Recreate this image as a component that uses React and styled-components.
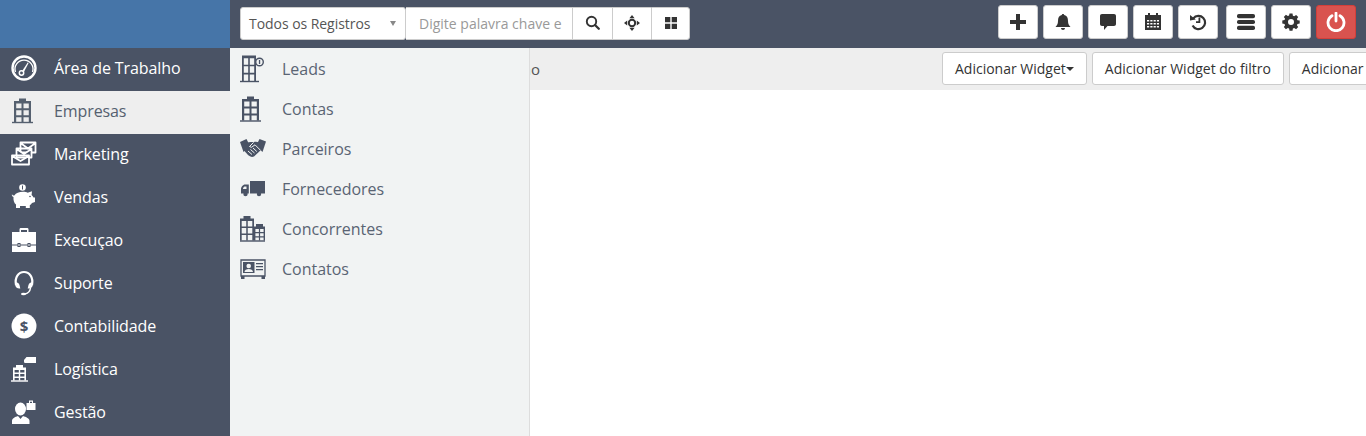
import React from "react";
import styled, { createGlobalStyle } from "styled-components";

const GlobalStyle = createGlobalStyle`
  html, body { margin: 0; padding: 0; height: 100%; overflow: hidden; background: #fff; }
  body { font-family: "Open Sans", "Liberation Sans", sans-serif; }
  #root { height: 100%; }
`;

const Page = styled.div`
  display: grid;
  grid-template-columns: 230px 1fr;
  grid-template-rows: 48px 1fr;
  height: 436px;
  position: relative;
  overflow: hidden;
`;
const Logo = styled.div`
  background: #4675a8;
`;
const TopBar = styled.header`
  background: #4a5365;
  display: flex;
  align-items: flex-start;
  justify-content: space-between;
  padding: 5px 10px 0;
`;
const SearchGroup = styled.div`
  display: flex;
  height: 33px;
  margin-top: 2px;
`;
const Select = styled.div`
  width: 166px;
  box-sizing: border-box;
  background: #fff;
  border: 1px solid #ccc;
  border-radius: 3px;
  display: flex;
  align-items: center;
  justify-content: space-between;
  padding: 0 9px 0 8px;
  font-size: 14px;
  letter-spacing: -0.05px;
  color: #555;
  &::after {
    content: "";
    border-left: 3.5px solid transparent;
    border-right: 3.5px solid transparent;
    border-top: 5px solid #888;
  }
`;
const SearchInput = styled.div`
  width: 166px;
  box-sizing: border-box;
  background: #fff;
  border-top: 1px solid #ccc;
  border-bottom: 1px solid #ccc;
  display: flex;
  align-items: center;
  padding: 0 12px 0 13px;
  font-size: 14px;
  color: #999;
  white-space: nowrap;
  overflow: hidden;
`;
const SearchButton = styled.div`
  width: ${(p) => (p.$first ? "40px" : "39px")};
  box-sizing: border-box;
  background: #fff;
  border: 1px solid #ccc;
  border-right-width: ${(p) => (p.$last ? "1px" : "0")};
  border-radius: ${(p) => (p.$last ? "0 3px 3px 0" : "0")};
  display: flex;
  align-items: center;
  justify-content: center;
  padding-bottom: 2px;
  color: #333;
`;
const Actions = styled.div`
  display: flex;
  gap: 5px;
`;
const ActionButton = styled.div`
  width: 40px;
  height: 34px;
  box-sizing: border-box;
  background: ${(p) => (p.$danger ? "#d9534f" : "#fff")};
  border: 1px solid ${(p) => (p.$danger ? "#d43f3a" : "#ccc")};
  border-radius: 3px;
  margin-left: ${(p) => (p.$spaced ? "3px" : "0")};
  display: flex;
  align-items: center;
  justify-content: center;
  color: ${(p) => (p.$danger ? "#fff" : "#333")};
`;
const Sidebar = styled.nav`
  background: #4a5365;
`;
const SideItem = styled.div`
  height: 43px;
  box-sizing: border-box;
  padding-bottom: 3px;
  display: flex;
  align-items: center;
  background: ${(p) => (p.$active ? "#eeeeee" : "transparent")};
  color: ${(p) => (p.$active ? "#55606f" : "#fff")};
  font-size: 16px;
  letter-spacing: -0.1px;
`;
const SideIcon = styled.span`
  width: 54px;
  padding-left: 11px;
  box-sizing: border-box;
  display: flex;
  align-items: center;
  flex: none;
`;
const Main = styled.main`
  min-width: 0;
  overflow: hidden;
`;
const ContentBar = styled.div`
  height: 42px;
  background: #eeeeee;
  display: flex;
  align-items: flex-start;
  padding-top: 4px;
  box-sizing: border-box;
`;
const Title = styled.div`
  width: 310px;
  flex: none;
  height: 34px;
  line-height: 35px;
  text-align: right;
  font-size: 15px;
  color: #555;
  white-space: nowrap;
  overflow: hidden;
`;
const WidgetButtons = styled.div`
  display: flex;
  gap: 5px;
  margin-left: 402px;
`;
const WidgetButton = styled.div`
  height: 33px;
  box-sizing: border-box;
  background: #fff;
  border: 1px solid #ccc;
  border-radius: 3px;
  padding: 0 ${(p) => (p.$bleed ? "40px" : "12px")} 0 12px;
  display: flex;
  align-items: center;
  flex: none;
  font-size: 14px;
  color: #333;
  white-space: nowrap;
`;
const Caret = styled.span`
  border-left: 4px solid transparent;
  border-right: 4px solid transparent;
  border-top: 4px solid #333;
`;
const SubMenu = styled.div`
  position: absolute;
  left: 230px;
  top: 48px;
  bottom: 0;
  width: 300px;
  box-sizing: border-box;
  background: #f1f3f3;
  border-right: 1px solid #ddd;
  padding-top: 1px;
`;
const SubItem = styled.div`
  height: 40px;
  display: flex;
  align-items: center;
  font-size: 16px;
  letter-spacing: -0.02px;
  color: #5a6473;
`;
const SubIcon = styled.span`
  width: 52px;
  padding-left: 10px;
  box-sizing: border-box;
  display: flex;
  align-items: center;
  flex: none;
  color: #4a5365;
`;

const Ico = ({ size = 26, w, children }) => (
  <svg width={w || size} height={size} viewBox={`0 0 ${w || size} ${size}`} fill="currentColor" style={{ display: "block" }}>
    {children}
  </svg>
);

// frame with two columns and three rows of windows, on a ground line
const Building = ({ x = 0, y = 0, w = 18, h = 22, bar = 22, cap = true, edge = 2.2, gap = 2 }) => {
  const left = 2;
  const inner = w - 4;
  const top = cap ? 2.4 : 0.6;
  const cw = (inner - edge * 2 - gap) / 2;
  const firstRow = top + 2.6;
  const rh = (h - firstRow - gap * 2) / 3;
  const holes = [];
  for (let r = 0; r < 3; r++) {
    for (let c = 0; c < 2; c++) {
      const hx = left + edge + c * (cw + gap);
      const hy = firstRow + r * (rh + gap);
      holes.push(`M${hx} ${hy}h${cw}v${rh}h-${cw}z`);
    }
  }
  return (
    <g transform={`translate(${x} ${y})`}>
      <path fillRule="evenodd" d={`M${left} ${top}h${inner}v${h - top}h-${inner}z ${holes.join(" ")}`} />
      {cap && <rect x={w / 2 - 3.5} y="0" width="7" height="3" />}
      <rect x={(w - bar) / 2} y={h - 0.2} width={bar} height="1.4" />
    </g>
  );
};

const Gauge = () => (
  <Ico>
    <circle cx="13" cy="13" r="11.500" fill="none" stroke="currentColor" strokeWidth="2.400" />
    <path d="M4.500 17A9 9 0 1 1 21.500 17" fill="none" stroke="currentColor" strokeWidth="1.300" />
    <circle cx="10.500" cy="18" r="2.200" fill="none" stroke="currentColor" strokeWidth="1.500" />
    <path d="M11 16.200 16.700 7.500l.9.5-4.700 9z" />
  </Ico>
);
const Mails = () => (
  <Ico>
    <g fill="none" stroke="currentColor" strokeWidth="1.800" strokeLinejoin="round">
      <path d="M9.500 1.500h15v10h-15zM9.500 2l7.500 5.500L24.500 2" />
      <path d="M5.500 7.500h15v9h-15zM5.500 8l7.500 5 7.500-5" fill="#4a5365" />
      <path d="M1 14.500h17v9H1zM1 15l8.500 5 8.500-5" fill="#4a5365" />
    </g>
  </Ico>
);
const Piggy = () => (
  <Ico>
    <circle cx="11.500" cy="3.500" r="3.300" />
    <rect x="11" y="1.500" width="1" height="4" fill="#4a5365" />
    <path d="M2.500 13c-1.500-.5-2-1.800-1.500-2.800.4 1 1.200 1.400 2.300 1.200C5 9 8 7.800 12 7.800c2 0 3.500.4 4.700 1l4.300-1.600-.4 3.800c1 .8 1.500 1.600 1.900 2.400h1.500v4.500l-3 1c-.5 1-1.300 1.800-2.200 2.400V24h-4v-2H9v2H5v-3.400C3 19 2.200 16 2.500 13z" />
    <circle cx="19" cy="12.500" r=".8" fill="#4a5365" />
  </Ico>
);
const Case = () => (
  <Ico>
    <path fillRule="evenodd" d="M8.500 5V2.500C8.500 1.500 9 1 10 1h6c1 0 1.500.5 1.500 1.500V5zM10 3v2h6V3z" />
    <path d="M1 5h24v20H1z" />
    <rect x="1" y="17.500" width="24" height="1" fill="#4a5365" />
    <path d="M6.500 16h3v4h-3zM16.500 16h3v4h-3z" fill="#4a5365" />
    <path d="M7.500 17h1v2h-1zM17.500 17h1v2h-1z" />
  </Ico>
);
const Headset = () => (
  <Ico>
    <path d="M5 15C3.500 7.500 7.500 2 13 2s9.500 5.500 8 13" fill="none" stroke="currentColor" strokeWidth="2.200" />
    <path d="M4 12.500c1.800-.5 3.800.5 4.500 2.500l.8 3.500c-2.500.5-4.500-1-5-3zM22 12.500c-1.800-.5-3.800.5-4.500 2.500l-.8 3.500c2.500.5 4.500-1 5-3z" />
    <path d="M19.500 18c-.5 3.500-2.500 5.500-6 6" fill="none" stroke="currentColor" strokeWidth="1.500" />
    <ellipse cx="12.500" cy="24" rx="2.500" ry="1.300" />
  </Ico>
);
const Dollar = () => (
  <svg width="26" height="26" viewBox="0 0 26 26" style={{ display: "block" }}>
    <circle cx="13" cy="13" r="12.500" fill="currentColor" />
    <text x="13" y="18.500" textAnchor="middle" fontSize="15" fontWeight="700" fontFamily="Open Sans, sans-serif" fill="#4a5365">$</text>
  </svg>
);
const Logistics = () => (
  <Ico>
    <Building x={0} y={9} w={17} h={15.500} bar={17} edge={1.600} gap={1.400} />
    <path d="M13 4 15.500 1h9.500v6H14.500c-1 0-1.500-.5-1.500-1.500z" />
  </Ico>
);
const Manager = () => (
  <Ico>
    <ellipse cx="9.500" cy="10" rx="5.500" ry="6.500" />
    <path d="M1 25v-3C1 19.500 4 18 7 17l2.500 3L12 17c3 1 6.500 2.500 6.500 5v3z" />
    <path fillRule="evenodd" d="M15.500 4V11h9V4h-2.500V1.500h-4V4zM19 2.700h2V4h-2z" />
  </Ico>
);

const LeadIcon = () => (
  <Ico w={26} size={28}>
    <Building x={0} y={0} w={18} h={26} bar={20} cap={false} edge={1.800} gap={1.600} />
    <circle cx="19.500" cy="7" r="3.800" fill="#f1f3f3" stroke="currentColor" strokeWidth="1.400" />
    <rect x="18.900" y="5" width="1.300" height="4" />
  </Ico>
);
const Handshake = () => (
  <Ico w={26} size={22}>
    <path d="M0 4 6.500 1 10 8 3.500 14z" />
    <path d="M26 3.500 19.500 1 16 8l6.500 6z" />
    <path d="M6.500 5c3-1.300 5-1.300 7-.8 2-.6 4-.5 6 .8l2 6.500-7.500 7c-2.500 1-4 0-6-1.500l-4-4.500z" />
    <path d="M13.500 4.500 9.500 8.500l2 .8 3.500-2.500 5.500 5.500M8 13l4 3.500M10.500 11.500l4 3.500M13 10l3.800 3.500" fill="none" stroke="#f1f3f3" strokeWidth="1" />
  </Ico>
);
const Truck = () => (
  <Ico w={26} size={22}>
    <path d="M10 3h15v12.500H10z" />
    <path fillRule="evenodd" d="M8.800 6.500v9H1v-4.500C1 9 3 6.500 5 6.500zM4.500 8.500C3.700 9 3 10 3 11h3.500V8.500z" />
    <circle cx="5.500" cy="16" r="2.200" />
    <circle cx="19" cy="16" r="2.200" />
  </Ico>
);
const Buildings = () => (
  <Ico w={26} size={26}>
    <Building x={-2} y={0} w={18} h={24.500} bar={14} edge={1.700} gap={1.500} />
    <Building x={12} y={8} w={15} h={16.500} bar={11} edge={1.400} gap={1.200} />
  </Ico>
);
const Card = () => (
  <Ico w={26} size={22}>
    <path fill="none" stroke="currentColor" strokeWidth="1.300" d="M1 2h24v16H1z" />
    <path d="M3 4h11.500v11H3z" />
    <circle cx="8.700" cy="8" r="2.300" fill="#f1f3f3" />
    <path d="M4.500 14c0-2 2-3 4.200-3s4.300 1 4.300 3z" fill="#f1f3f3" />
    <path d="M16 5h7v1.200h-7zM16 8h7v1.200h-7zM16 11h7v1.200h-7z" />
    <path d="M1 18h3.500v3H1zM21.500 18H25v3h-3.500z" />
  </Ico>
);

const I16 = ({ children, vb = 16 }) => (
  <svg width={vb} height={vb} viewBox={`0 0 ${vb} ${vb}`} fill="currentColor" style={{ display: "block" }}>
    {children}
  </svg>
);

const menu = [
  ["Área de Trabalho", <Gauge />],
  ["Empresas", <Ico><Building x={1} y={0.500} w={21} h={23.500} bar={21} /></Ico>, true],
  ["Marketing", <Mails />],
  ["Vendas", <Piggy />],
  ["Execuçao", <Case />],
  ["Suporte", <Headset />],
  ["Contabilidade", <Dollar />],
  ["Logística", <Logistics />],
  ["Gestão", <Manager />],
];
const subMenu = [
  ["Leads", <LeadIcon />],
  ["Contas", <Ico w={26} size={26}><Building x={0} y={0.500} w={21} h={24} bar={21} /></Ico>],
  ["Parceiros", <Handshake />],
  ["Fornecedores", <Truck />],
  ["Concorrentes", <Buildings />],
  ["Contatos", <Card />],
];

const App = () => (
  <Page>
    <GlobalStyle />
    <Logo />
    <TopBar>
      <SearchGroup>
        <Select>Todos os Registros</Select>
        <SearchInput>Digite palavra chave e</SearchInput>
        <SearchButton $first>
          <I16>
            <circle cx="6.500" cy="6.500" r="4.700" fill="none" stroke="currentColor" strokeWidth="1.900" />
            <path d="M10 10l3.800 3.800" stroke="currentColor" strokeWidth="2.300" strokeLinecap="round" />
          </I16>
        </SearchButton>
        <SearchButton>
          <I16>
            <path d="M8 0l2.600 3.200H5.400zM8 16l-2.600-3.200h5.200zM0 8l3.200-2.600v5.200zM16 8l-3.200 2.600V5.400z" />
            <circle cx="8" cy="8" r="3.200" fill="none" stroke="currentColor" strokeWidth="2" />
          </I16>
        </SearchButton>
        <SearchButton $last>
          <I16>
            <path d="M2 2h5.300v5.300H2zM8.700 2H14v5.300H8.700zM2 8.700h5.300V14H2zM8.700 8.700H14V14H8.700z" />
          </I16>
        </SearchButton>
      </SearchGroup>
      <Actions>
        <ActionButton>
          <I16 vb={18}><path d="M7 1h4v6h6v4h-6v6H7v-6H1V7h6z" /></I16>
        </ActionButton>
        <ActionButton>
          <I16 vb={18}>
            <path d="M9 1c.7 0 1.200.5 1.200 1.100C13 2.700 14 5 14 8c0 3 1 4.500 2.500 6h-15C3 12.500 4 11 4 8c0-3 1-5.300 3.800-5.900C7.800 1.500 8.300 1 9 1z" />
            <path d="M7 15h4c0 1.200-.9 2-2 2s-2-.8-2-2z" />
          </I16>
        </ActionButton>
        <ActionButton>
          <I16 vb={18}>
            <path d="M3 1h12c1.200 0 2 .8 2 2v8c0 1.200-.8 2-2 2H8.500L5 17v-4H3c-1.200 0-2-.8-2-2V3c0-1.200.8-2 2-2z" />
          </I16>
        </ActionButton>
        <ActionButton>
          <I16 vb={18}>
            <path fillRule="evenodd" d="M4 0h2v2h6V0h2v2h3v15H1V2h3zM3 7v1.500h2.200V7zM6.300 7v1.500h2.200V7zM9.600 7v1.500h2.200V7zM12.900 7v1.500H15V7zM3 10v1.500h2.200V10zM6.300 10v1.500h2.200V10zM9.600 10v1.500h2.200V10zM12.900 10v1.500H15V10zM3 13v1.500h2.200V13zM6.300 13v1.500h2.200V13zM9.600 13v1.500h2.200V13zM12.900 13v1.500H15V13z" />
          </I16>
        </ActionButton>
        <ActionButton>
          <I16 vb={18}>
            <path d="M4.300 5.500A6.600 6.600 0 1 1 3.600 12.500" fill="none" stroke="currentColor" strokeWidth="2.200" />
            <path d="M1 2l5.800 4.500L1 7.500z" />
            <path d="M9.500 4.500h1.800V10H7V8.300h2.500z" />
          </I16>
        </ActionButton>
        <ActionButton $spaced>
          <I16 vb={18}>
            <rect x="0" y="1" width="18" height="4.200" rx="1.800" />
            <rect x="0" y="6.900" width="18" height="4.200" rx="1.800" />
            <rect x="0" y="12.800" width="18" height="4.200" rx="1.800" />
          </I16>
        </ActionButton>
        <ActionButton>
          <I16 vb={18}>
            <path fillRule="evenodd" d="M7.500 1h3l.4 2.200 1.300.6 1.900-1.300 2.100 2.100-1.300 1.900.6 1.300L17.700 8v3l-2.200.4-.6 1.300 1.300 1.900-2.100 2.100-1.900-1.300-1.300.6-.4 2.200h-3l-.4-2.200-1.300-.6-1.900 1.300-2.100-2.100 1.300-1.900-.6-1.300L.3 11V8l2.200-.4.6-1.300-1.300-1.900 2.100-2.100 1.900 1.300 1.300-.6zM9 6.500a3 3 0 1 0 0 6 3 3 0 0 0 0-6z" transform="translate(0 -.5)" />
          </I16>
        </ActionButton>
        <ActionButton $danger>
          <I16 vb={20}>
            <path d="M6 3.800a8 8 0 1 0 8 0" fill="none" stroke="currentColor" strokeWidth="2.800" strokeLinecap="round" />
            <path d="M10 1v8" stroke="currentColor" strokeWidth="2.800" strokeLinecap="round" />
          </I16>
        </ActionButton>
      </Actions>
    </TopBar>
    <Sidebar>
      {menu.map(([label, icon, active]) => (
        <SideItem key={label} $active={active}>
          <SideIcon>{icon}</SideIcon>
          {label}
        </SideItem>
      ))}
    </Sidebar>
    <Main>
      <ContentBar>
        <Title>Área de Trabalho</Title>
        <WidgetButtons>
          <WidgetButton>Adicionar Widget<Caret /></WidgetButton>
          <WidgetButton>Adicionar Widget do filtro</WidgetButton>
          <WidgetButton $bleed>Adicionar</WidgetButton>
        </WidgetButtons>
      </ContentBar>
    </Main>
    <SubMenu>
      {subMenu.map(([label, icon]) => (
        <SubItem key={label}>
          <SubIcon>{icon}</SubIcon>
          {label}
        </SubItem>
      ))}
    </SubMenu>
  </Page>
);

export default App;
